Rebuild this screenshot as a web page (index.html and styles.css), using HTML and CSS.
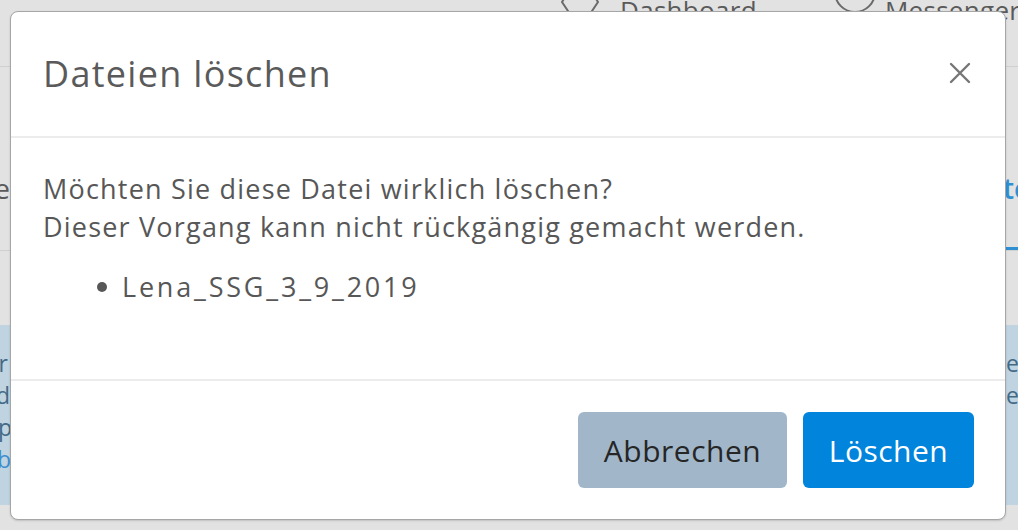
FILE: index.html
```html
<!DOCTYPE html>
<html lang="de">
<head>
<meta charset="utf-8">
<title>Dateien löschen</title>
<link rel="stylesheet" href="styles.css">
</head>
<body>
<div class="page">
  <header class="nav">
    <div class="edge-left"></div>
    <nav class="nav-items">
      <span class="nav-item">
        <svg class="nav-icon" width="44" height="30" viewBox="0 0 44 30"><path d="M14 -14 L4 2 L12 14 M30 -14 L40 2 L32 14" fill="none" stroke="#6a6a6a" stroke-width="2"/></svg>
        <span>Dashboard</span>
      </span>
      <span class="nav-item nav-item-tight">
        <svg class="nav-icon" width="44" height="30" viewBox="0 0 44 30"><circle cx="22" cy="-8" r="20" fill="none" stroke="#6a6a6a" stroke-width="2"/></svg>
        <span>Messenger</span>
      </span>
    </nav>
  </header>
  <section class="tabs">
    <div class="edge-left"><span class="heading">Übersicht Dateie</span></div>
    <div class="tabs-mid"></div>
    <div class="edge-right"><span class="tab-active">teilen</span></div>
  </section>
  <div class="spacer"></div>
  <section class="panel">
    <div class="edge-left panel-text">
      <span class="end-short">Hier</span>
      <span>Sie find</span>
      <span class="end-long">Lernp</span>
      <span class="link end-b">Hilfe ab</span>
    </div>
    <div class="panel-mid"></div>
    <div class="edge-right panel-text">
      <span>ehen</span>
      <span>eben</span>
    </div>
  </section>
</div>

<div class="modal" role="dialog" aria-labelledby="modal-title">
  <div class="modal-header">
    <h5 id="modal-title" class="modal-title">Dateien löschen</h5>
    <button class="close" type="button" aria-label="Schließen">
      <svg width="22" height="22" viewBox="0 0 22 22"><path d="M2 2 L20 20 M20 2 L2 20" stroke="#767676" stroke-width="2.4" stroke-linecap="round"/></svg>
    </button>
  </div>
  <div class="modal-body">
    <p class="message">Möchten Sie diese Datei wirklich löschen?<br>Dieser Vorgang kann nicht rückgängig gemacht werden.</p>
    <ul class="file-list">
      <li class="file-item">Lena_SSG_3_9_2019</li>
    </ul>
  </div>
  <div class="modal-footer">
    <button class="btn btn-cancel" type="button">Abbrechen</button>
    <button class="btn btn-delete" type="button">Löschen</button>
  </div>
</div>
</body>
</html>
```

FILE: styles.css
```css
* { box-sizing: border-box; }
html, body {
  margin: 0;
  padding: 0;
  width: 1018px;
  height: 530px;
  overflow: hidden;
  background: #e2e2e2;
  font-family: "Open Sans", "Noto Sans", sans-serif;
}

.page {
  width: 1018px;
  height: 530px;
  display: flex;
  flex-direction: column;
  color: #5c5c5c;
}

.nav {
  height: 67px;
  border-bottom: 1px solid #d0d0d0;
  display: flex;
}
.nav .edge-left { width: 10px; }
.nav-items {
  flex: 1;
  display: flex;
  justify-content: flex-start;
  padding-left: 548px;
  gap: 76px;
  font-size: 26px;
  line-height: 24px;
  letter-spacing: 0.3px;
  color: #5a5a5a;
  white-space: nowrap;
  overflow: hidden;
}
.nav-item {
  display: flex;
  align-items: flex-start;
  gap: 18px;
}
.nav-item-tight { gap: 8px; }
.nav-icon { display: block; }
.nav-item span { margin-top: -2px; }

.tabs {
  height: 184px;
  display: flex;
  border-bottom: 1px solid #d0d0d0;
}
.edge-left {
  width: 10px;
  overflow: hidden;
  display: flex;
  flex-direction: column;
  align-items: flex-end;
  white-space: nowrap;
}
.edge-right {
  width: 12px;
  overflow: hidden;
  display: flex;
  flex-direction: column;
  align-items: flex-start;
  white-space: nowrap;
}
.tabs-mid { flex: 1; }
.tabs .edge-left { justify-content: flex-start; padding-top: 104px; }
.heading { font-size: 28px; line-height: 34px; color: #5a5a5a; }
.tabs .edge-right {
  justify-content: flex-end;
  border-bottom: 3px solid #2f8fd3;
}
.tab-active {
  font-size: 28px;
  line-height: 34px;
  color: #2f8fd3;
  font-weight: 600;
  margin-bottom: 42px;
  margin-left: -3px;
}

.spacer { height: 74px; }

.panel {
  height: 180px;
  display: flex;
  background: #c0d3e0;
}
.panel-mid { flex: 1; }
.panel-text {
  padding-top: 22px;
  font-size: 23px;
  line-height: 32px;
  color: #426a87;
}
.panel-text .end-short { margin-right: 2px; }
.panel-text .end-long { margin-right: -2px; }
.panel-text .end-b { margin-right: -1px; }
.panel-text .link { color: #3b8ed0; }

/* Modal */
.modal {
  position: absolute;
  top: 11px;
  left: 10px;
  width: 996px;
  height: 509px;
  background: #fff;
  border: 1px solid #a6a6a6;
  border-radius: 8px;
  box-shadow: 0 1px 2px rgba(0,0,0,0.15);
  display: flex;
  flex-direction: column;
  color: #575757;
}
.modal-header {
  height: 126px;
  display: flex;
  align-items: center;
  justify-content: space-between;
  padding: 0 34px 2px 32px;
  border-bottom: 2px solid #ececec;
}
.modal-title {
  margin: 0;
  font-size: 36px;
  font-weight: 400;
  color: #5a5a5a;
  letter-spacing: 1.3px;
}
.close {
  border: 0;
  background: none;
  padding: 0;
  width: 22px;
  height: 22px;
  display: block;
  cursor: pointer;
}
.close svg { display: block; }

.modal-body {
  flex: 1;
  padding: 32px 32px;
}
.message {
  margin: 0;
  font-size: 27px;
  line-height: 38px;
  letter-spacing: 1.2px;
  color: #575757;
}
.file-list {
  list-style: none;
  margin: 22px 0 0;
  padding: 0 0 0 54px;
}
.file-item {
  display: flex;
  align-items: center;
  gap: 15px;
  font-size: 27px;
  line-height: 38px;
  letter-spacing: 2.8px;
  color: #575757;
}
.file-item::before {
  content: "";
  width: 10px;
  height: 10px;
  border-radius: 50%;
  background: #575757;
}

.modal-footer {
  border-top: 2px solid #ececec;
  padding: 31px 31px 31px;
  display: flex;
  justify-content: flex-end;
  gap: 16px;
}
.btn {
  height: 76px;
  border: 0;
  border-radius: 6px;
  font-family: inherit;
  font-size: 30px;
  letter-spacing: 0.5px;
  padding: 0;
  cursor: pointer;
}
.btn-cancel {
  width: 209px;
  background: #a1b7c9;
  color: #262626;
}
.btn-delete {
  width: 171px;
  background: #0084dc;
  color: #fff;
}
```
